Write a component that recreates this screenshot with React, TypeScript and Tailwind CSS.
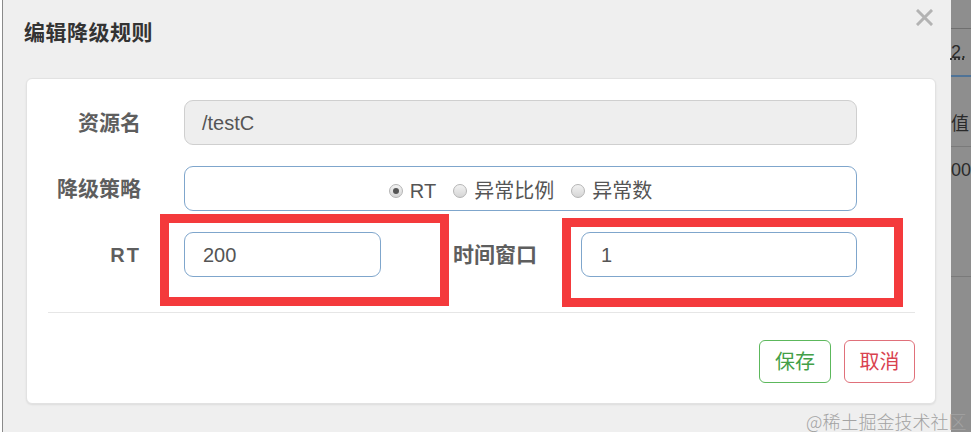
const sans = "font-['Liberation_Sans','Noto_Sans_CJK_SC',sans-serif]";

function Radio({ checked, label }: { checked?: boolean; label: string }) {
  return (
    <span className="flex items-center gap-[7px]">
      <span className="w-[14px] h-[14px] rounded-full border border-[#b5b5b5] bg-gradient-to-b from-[#f2f2f2] to-[#d6d6d6] flex items-center justify-center">
        {checked && <span className="w-[6px] h-[6px] rounded-full bg-[#555]" />}
      </span>
      <span>{label}</span>
    </span>
  );
}

export default function App() {
  return (
    <div className={`relative w-[971px] h-[437px] overflow-hidden bg-white ${sans}`}>
      <div className="flex h-[432px]">
        {/* Modal */}
        <div className="ml-[2px] w-[958px] h-full border-l border-[#8a8a8a] bg-[#efefef] flex flex-col">
          {/* Header */}
          <div className="flex justify-between items-center h-[66px] pl-[21px] pr-[18px]">
            <h4 className="text-[21px] font-bold text-[#333] tracking-[0.5px]">编辑降级规则</h4>
            <svg width="17" height="17" viewBox="0 0 17 17" className="self-start mt-[9px]">
              <path d="M2 2 L15 15 M15 2 L2 15" stroke="#b3b3b3" strokeWidth="3" strokeLinecap="square" />
            </svg>
          </div>

          {/* Card */}
          <div className="mt-[12px] ml-[23px] w-[910px] h-[326px] bg-white rounded-[6px] border border-[#e2e2e2] shadow-[0_1px_2px_rgba(0,0,0,0.08)] pt-[21px]">
            <div className="flex flex-col gap-[21px]">
              {/* Resource */}
              <div className="flex items-center h-[45px]">
                <label className="w-[114px] text-right text-[21px] font-bold text-[#5e5e5e]">资源名</label>
                <div className="ml-[43px] w-[673px] h-[45px] rounded-[9px] border border-[#cfcfcf] bg-[#eeeeee] flex items-center pl-[17px] text-[20px] text-[#555]">
                  /testC
                </div>
              </div>

              {/* Strategy */}
              <div className="flex items-center h-[45px]">
                <label className="w-[114px] text-right text-[21px] font-bold text-[#5e5e5e]">降级策略</label>
                <div className="ml-[43px] w-[673px] h-[45px] rounded-[9px] border border-[#7fa6cc] bg-white flex items-center justify-center gap-[17px] pt-[5px] text-[20px] text-[#555]">
                  <Radio checked label="RT" />
                  <Radio label="异常比例" />
                  <Radio label="异常数" />
                </div>
              </div>

              {/* RT + window */}
              <div className="flex items-center h-[45px]">
                <label className="w-[114px] text-right text-[20px] font-bold text-[#5e5e5e] tracking-[2px]">RT</label>
                <div className="ml-[43px] w-[197px] h-[45px] rounded-[9px] border border-[#7fa6cc] bg-white flex items-center pl-[18px] text-[20px] text-[#555]">
                  200
                </div>
                <label className="ml-[72px] w-[85px] text-[21px] font-bold text-[#5e5e5e] whitespace-nowrap">时间窗口</label>
                <div className="ml-[43px] w-[276px] h-[45px] rounded-[9px] border border-[#7fa6cc] bg-white flex items-center pl-[19px] text-[20px] text-[#555]">
                  1
                </div>
              </div>
            </div>

            <div className="mt-[35px] ml-[21px] w-[867px] h-px bg-[#e6e6e6]" />

            <div className="mt-[27px] flex justify-end gap-[13px] pr-[20px]">
              <button className="w-[72px] h-[43px] rounded-[6px] border border-[#5cb85c] text-[#43a047] text-[20px] bg-white">保存</button>
              <button className="w-[71px] h-[43px] rounded-[6px] border border-[#e0707a] text-[#d9424f] text-[20px] bg-white">取消</button>
            </div>
          </div>
        </div>

        {/* Page behind the overlay */}
        <div className="flex-1 bg-[#8e8e8e] flex flex-col text-[#2a2a2a] text-[18px] leading-none">
          <div className="h-[29px] border-b border-[#6f6f6f]" />
          <div className="h-[48px] border-b-2 border-[#4f7397] pt-[14px]">
            <span className="underline decoration-dotted">2.</span>
          </div>
          <div className="h-[70px] border-b border-[#7a7a7a] pt-[38px]">值</div>
          <div className="h-[130px] border-b border-[#7a7a7a] pt-[14px]">00</div>
        </div>
      </div>

      {/* Annotation boxes */}
      <div className="absolute left-[160px] top-[214px] w-[289px] h-[92px] border-[9px] border-[#f43a3c]" />
      <div className="absolute left-[562px] top-[218px] w-[341px] h-[89px] border-[9px] border-[#f43a3c]" />

      {/* Watermark */}
      <div className="absolute left-[806px] top-[408px] text-[18px] text-[#a3a3a3] font-['Noto_Sans_CJK_SC',sans-serif] font-light whitespace-nowrap">
        @稀土掘金技术社区
      </div>
    </div>
  );
}
